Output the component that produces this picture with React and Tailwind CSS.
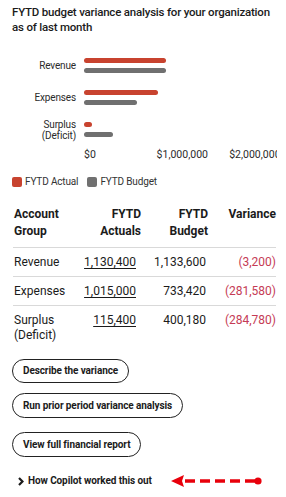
const groups = [
  { label: ['Revenue'], actual: 1130400, budget: 1133600 },
  { label: ['Expenses'], actual: 1015000, budget: 733420 },
  { label: ['Surplus', '(Deficit)'], actual: 115400, budget: 400180 },
]

const rows = [
  { name: ['Revenue'], actual: '1,130,400', budget: '1,133,600', variance: '(3,200)' },
  { name: ['Expenses'], actual: '1,015,000', budget: '733,420', variance: '(281,580)' },
  { name: ['Surplus', '(Deficit)'], actual: '115,400', budget: '400,180', variance: '(284,780)' },
]

const PX_PER_MILLION = 72.6

function Arrow() {
  return (
    <svg width="92" height="14" viewBox="0 0 92 14" className="ml-[19px] shrink-0">
      <path d="M0 7 L13 1 L11 7 L13 13 Z" fill="#e8000b" />
      <line x1="14" y1="7" x2="86" y2="7" stroke="#e8000b" strokeWidth="3.6" strokeDasharray="10 5" />
      <circle cx="87" cy="7" r="3.6" fill="#e8000b" />
    </svg>
  )
}

export default function App() {
  return (
    <div className="w-[286px] min-h-[497px] bg-white text-[#1b1b1b] px-3 pt-[5px] font-['Roboto',sans-serif]">
      <h1 className="text-[11.5px] leading-[15px] font-medium tracking-[-0.2px]">
        FYTD budget variance analysis for your organization as of last month
      </h1>

      {/* Chart */}
      <div className="mt-[23px] w-[265px] overflow-hidden">
        <div className="flex flex-col gap-[17px]">
          {groups.map(g => (
            <div key={g.label[0]} className="flex items-center h-[15px]">
              <div className="w-[64px] shrink-0 text-right text-[10px] leading-[11px] tracking-[-0.15px] text-[#2b2b2b]">
                {g.label.map(l => <div key={l}>{l}</div>)}
              </div>
              <div className="ml-2 flex flex-col gap-[5px]">
                <div className="h-[5px] rounded-full bg-[#c8432f]" style={{ width: (g.actual / 1e6) * PX_PER_MILLION }} />
                <div className="h-[5px] rounded-full bg-[#707070]" style={{ width: (g.budget / 1e6) * PX_PER_MILLION }} />
              </div>
            </div>
          ))}
        </div>
        <div className="mt-[11px] ml-[72px] flex text-[10.5px] leading-[13px] text-[#2b2b2b] whitespace-nowrap">
          <span className="w-[72.6px] shrink-0">$0</span>
          <span className="w-[72.6px] shrink-0">$1,000,000</span>
          <span className="w-[72.6px] shrink-0">$2,000,000</span>
        </div>
      </div>

      {/* Legend */}
      <div className="mt-[14px] flex items-center text-[10px] leading-[14px] tracking-[-0.15px] text-[#333]">
        <span className="w-[10px] h-[10px] rounded-[2px] bg-[#c8432f]" />
        <span className="ml-[3px]">FYTD Actual</span>
        <span className="ml-[9px] w-[10px] h-[10px] rounded-[2px] bg-[#707070]" />
        <span className="ml-[3px]">FYTD Budget</span>
      </div>

      {/* Table */}
      <div className="mt-[17px] ml-px w-[263px] text-[12px]">
        <div className="grid grid-cols-[62px_65px_67px_68px] pl-px pb-[7px] border-b border-[#d9d9d9] font-bold leading-[17px]">
          <div>Account<br />Group</div>
          <div className="text-right">FYTD<br />Actuals</div>
          <div className="text-right">FYTD<br />Budget</div>
          <div className="text-right">Variance</div>
        </div>
        {rows.map((r, i) => (
          <div
            key={r.name[0]}
            className={`grid grid-cols-[62px_65px_67px_68px] pl-px py-[6.5px] leading-[15px] ${i < rows.length - 1 ? 'border-b border-[#d9d9d9]' : ''}`}
          >
            <div>{r.name.map(n => <div key={n}>{n}</div>)}</div>
            <div className="text-right pr-[5px]"><span className="underline underline-offset-2">{r.actual}</span></div>
            <div className="text-right pr-[2px]">{r.budget}</div>
            <div className="text-right text-[#c53b55]">{r.variance}</div>
          </div>
        ))}
      </div>

      {/* Suggested prompts */}
      <div className="mt-[10px] flex flex-col items-start text-[10px] font-bold tracking-[-0.1px]">
        <button className="h-[24px] px-[10px] rounded-full border border-[#222] leading-none">Describe the variance</button>
        <button className="mt-[10px] h-[25px] px-[10px] rounded-full border border-[#222] leading-none">Run prior period variance analysis</button>
        <button className="mt-[14px] h-[25px] px-[10px] rounded-full border border-[#222] leading-none">View full financial report</button>
      </div>

      <div className="mt-[17px] flex items-center text-[10px] font-bold leading-[14px] tracking-[-0.1px] whitespace-nowrap">
        <svg width="6" height="9" viewBox="0 0 6 9" className="ml-[6px] mr-[4px] shrink-0">
          <path d="M1 1 L4.5 4.5 L1 8" fill="none" stroke="#1b1b1b" strokeWidth="2.2" />
        </svg>
        <span>How Copilot worked this out</span>
        <Arrow />
      </div>
    </div>
  )
}
